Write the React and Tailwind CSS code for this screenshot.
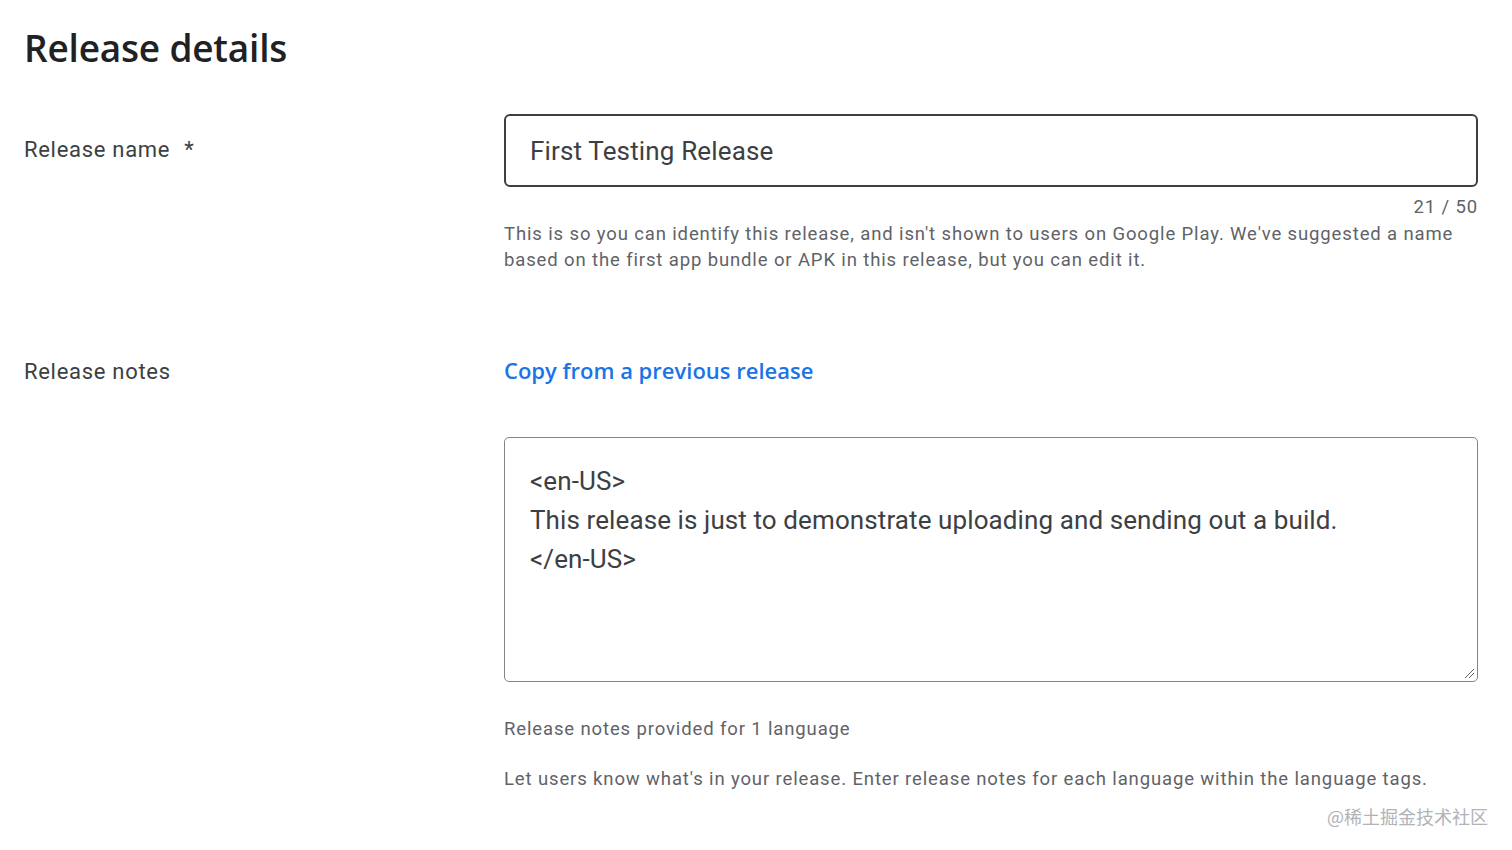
import React from "react";

export default function App() {
  return (
    <div className="w-[1512px] h-[850px] bg-white relative overflow-hidden" style={{ fontFamily: "Roboto, 'Noto Sans', sans-serif" }}>
      <div className="pl-[24px] pr-[34px]">
        <h1 className="pt-[24px] text-[37px] leading-[48px] font-semibold text-[#202124] tracking-[-0.2px]" style={{ fontFamily: "'Open Sans', Lato, sans-serif" }}>
          Release details
        </h1>

        <div className="grid grid-cols-[480px_1fr] mt-[42px]">
          <div className="pt-[22px] text-[22px] leading-[28px] text-[#3c4043] tracking-[0.7px]">
            Release name <span className="ml-[8px]">*</span>
          </div>
          <div>
            <div className="h-[73px] border-2 border-[#3c4043] rounded-[6px] flex items-center pl-[24px] pr-[24px] pt-[2px] text-[26px] text-[#3c4043] tracking-[0.15px]">
              First Testing Release
            </div>
            <div className="text-right text-[18.5px] leading-[22px] mt-[9px] text-[#5f6368] tracking-[0.87px]">21 / 50</div>
            <p className="text-[18.5px] leading-[26px] text-[#5f6368] tracking-[0.87px] mt-[3px]">
              This is so you can identify this release, and isn't shown to users on Google Play. We've suggested a name based on the first app bundle or APK in this release, but you can edit it.
            </p>
          </div>
        </div>

        <div className="grid grid-cols-[480px_1fr] mt-[83px]">
          <div className="pt-[2px] text-[22px] leading-[28px] text-[#3c4043] tracking-[0.7px]">Release notes</div>
          <div>
            <a className="block text-[22px] leading-[28px] font-semibold text-[#1a73e8]" style={{ fontFamily: "'Open Sans', Lato, sans-serif" }}>
              Copy from a previous release
            </a>
            <div className="relative mt-[53px] h-[245px] border border-[#80868b] rounded-[5px] px-[25px] pt-[24px] text-[26px] leading-[39px] text-[#3c4043] tracking-[0.1px]">
              <div>&lt;en-US&gt;</div>
              <div>This release is just to demonstrate uploading and sending out a build.</div>
              <div>&lt;/en-US&gt;</div>
              <svg className="absolute right-[2px] bottom-[2px]" width="12" height="12" viewBox="0 0 12 12">
                <line x1="2" y1="11" x2="11" y2="2" stroke="#5f6368" strokeWidth="1" />
                <line x1="6" y1="11" x2="11" y2="6" stroke="#5f6368" strokeWidth="1" />
              </svg>
            </div>
            <p className="mt-[35px] text-[18.5px] leading-[24px] text-[#5f6368] tracking-[0.87px]">Release notes provided for 1 language</p>
            <p className="mt-[26px] text-[18.5px] leading-[24px] text-[#5f6368] tracking-[0.87px]">
              Let users know what's in your release. Enter release notes for each language within the language tags.
            </p>
          </div>
        </div>
      </div>
      <div className="absolute right-[24px] top-[804px] text-[18px] leading-[24px] text-[#b0b3b8]" style={{ fontFamily: "'Noto Sans CJK SC', sans-serif" }}>
        @稀土掘金技术社区
      </div>
    </div>
  );
}
